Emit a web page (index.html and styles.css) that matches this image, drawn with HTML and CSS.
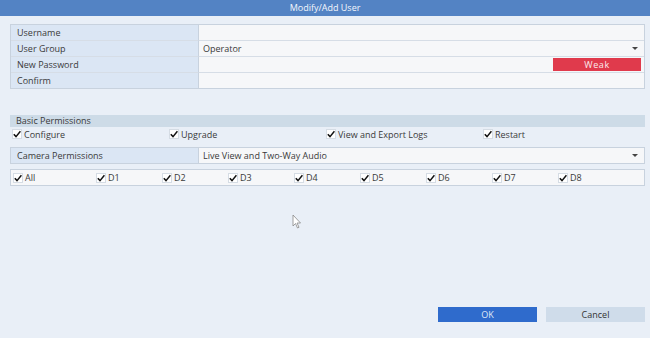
FILE: index.html
```html
<!DOCTYPE html>
<html lang="en">

<head>
    <meta charset="UTF-8">
    <title>Modify/Add User</title>
    <link rel="stylesheet" href="styles.css">
</head>

<body>
    <div class="dlg">
        <div class="tt">Modify/Add User</div>
        <div class="cn">
            <div class="tb">
                <span class="lb">Username</span>
                <span class="vl"></span>
                <span class="lb">User Group</span>
                <span class="vl sel">Operator<i class="ar"></i></span>
                <span class="lb">New Password</span>
                <span class="vl pw"><b class="wk">Weak</b></span>
                <span class="lb">Confirm</span>
                <span class="vl"></span>
            </div>

            <div class="hd">Basic Permissions</div>
            <div class="ck perm">
                <label><i class="cb"></i>Configure</label>
                <label><i class="cb"></i>Upgrade</label>
                <label><i class="cb"></i>View and Export Logs</label>
                <label><i class="cb"></i>Restart</label>
            </div>

            <div class="tb cam">
                <span class="lb">Camera Permissions</span>
                <span class="vl sel">Live View and Two-Way Audio<i class="ar"></i></span>
            </div>

            <div class="ck ch">
                <label><i class="cb"></i>All</label>
                <label><i class="cb"></i>D1</label>
                <label><i class="cb"></i>D2</label>
                <label><i class="cb"></i>D3</label>
                <label><i class="cb"></i>D4</label>
                <label><i class="cb"></i>D5</label>
                <label><i class="cb"></i>D6</label>
                <label><i class="cb"></i>D7</label>
                <label><i class="cb"></i>D8</label>
            </div>

            <div class="sp">
                <svg class="cur" width="10" height="15" viewBox="0 0 10 15">
                    <path d="M1 1 L1 12 L3.5 9.5 L5.5 14 L7 13.3 L5 9 L8.5 9 Z" fill="#fff" stroke="#888" stroke-width="0.8"/>
                </svg>
            </div>

            <div class="bt">
                <button class="ok">OK</button>
                <button class="cc">Cancel</button>
            </div>
        </div>
    </div>
</body>

</html>
```

FILE: styles.css
```css
html,
body {
    margin: 0;
    height: 100%;
}

body {
    font-family: "Open Sans", "Noto Sans", sans-serif;
    font-size: 9px;
    color: #3a3a3a;
    background: #e9eff7;
}

.dlg {
    width: 650px;
    height: 338px;
    display: flex;
    flex-direction: column;
}

.tt {
    height: 16px;
    line-height: 16px;
    text-align: center;
    color: #f4f7fc;
    background: #5383c4;
}

.cn {
    flex-grow: 1;
    display: flex;
    flex-direction: column;
    padding: 8px 5px 0 10px;
}

.tb {
    display: grid;
    grid-template-columns: 188px 1fr;
    border: 1px solid #c8d2de;
}

.tb span {
    height: 15px;
    line-height: 15px;
    border-bottom: 1px solid #d6dde6;
}

.tb span:nth-last-child(-n+2) {
    border-bottom: none;
}

.lb {
    padding-left: 6px;
    background: #dbe6f4;
    border-right: 1px solid #c8d2de;
}

.vl {
    padding-left: 4px;
    background: #f6f7f9;
    display: flex;
    align-items: center;
}

.ar {
    margin-left: auto;
    margin-right: 6px;
    border: 3px solid transparent;
    border-top: 3px solid #444;
    border-bottom: none;
}

.pw {
    justify-content: flex-end;
}

.wk {
    font-weight: normal;
    width: 88px;
    height: 13px;
    line-height: 13px;
    margin-right: 3px;
    text-align: center;
    color: #fbeaec;
    letter-spacing: .6px;
    background: #e03a4c;
}

.hd {
    margin-top: 26px;
    height: 12px;
    line-height: 12px;
    padding-left: 6px;
    background: #cddbe7;
}

.ck {
    display: flex;
    align-items: center;
}

.ck label {
    display: flex;
    align-items: center;
    gap: 2px;
}

.cb {
    width: 8px;
    height: 8px;
    border: 1px solid #d5dce4;
    background: #fff no-repeat center/8px 8px url("data:image/svg+xml,%3Csvg xmlns='http://www.w3.org/2000/svg' viewBox='0 0 8 8'%3E%3Cpath d='M0.8 4.2 L3 6.6 L7.4 1.2' fill='none' stroke='%23111' stroke-width='1.5'/%3E%3C/svg%3E");
}

.perm {
    height: 14px;
    padding-left: 2px;
}

.perm label {
    width: 157px;
}

.cam {
    margin-top: 6px;
}

.ch {
    margin-top: 5px;
    height: 15px;
    padding-left: 2px;
    background: #f6f7f9;
    border: 1px solid #c8d2de;
}

.ch label {
    width: 66px;
}

.ch label:first-child {
    width: 83px;
}

.sp {
    flex-grow: 1;
    position: relative;
}

.cur {
    position: absolute;
    left: 282px;
    top: 28px;
}

.bt {
    display: flex;
    justify-content: flex-end;
    gap: 9px;
    padding-bottom: 16px;
}

button {
    width: 99px;
    height: 15px;
    padding: 0;
    border: none;
    font-family: inherit;
    font-size: 9px;
}

.ok {
    color: #dfe8f6;
    background: #2f6bcc;
}

.cc {
    color: #333;
    background: #cfdcea;
}
```
